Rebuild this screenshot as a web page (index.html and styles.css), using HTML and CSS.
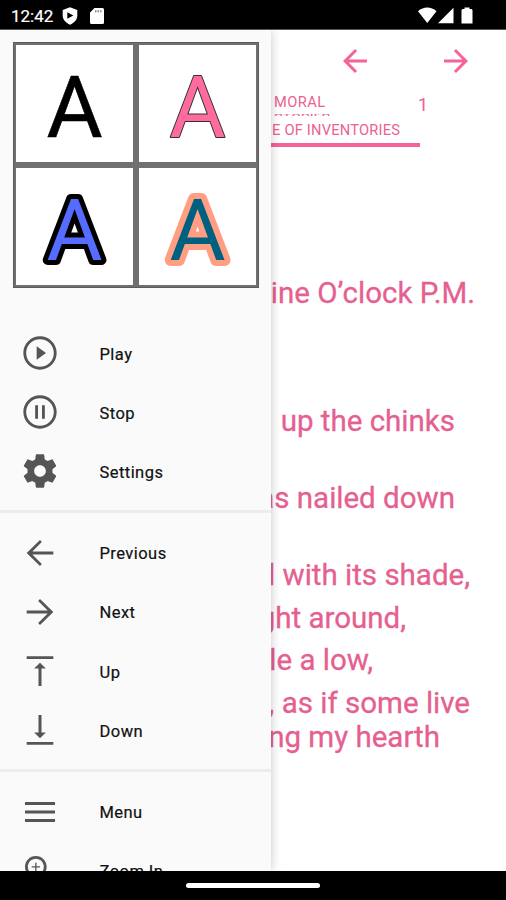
FILE: index.html
```html
<!DOCTYPE html>
<html lang="en">
<head>
<meta charset="utf-8">
<title>Reader</title>
<link rel="stylesheet" href="styles.css">
</head>
<body>
<div class="screen">
  <header class="status">
    <span class="clock">12:42</span>
    <svg class="shield" viewBox="0 0 16 18"><path fill="#fff" d="M8 0.3 15.3 3v5.5c0 4.2-3 7.4-7.3 9.2C3.700 15.900.7 12.700.7 8.500V3z"/><path fill="#000" d="M5.300 5.200v6.600l6-3.300z"/></svg>
    <svg class="sd" viewBox="0 0 14 16"><path fill="#fff" d="M4.500 0h8A1.500 1.500 0 0 1 14 1.500v13a1.500 1.500 0 0 1-1.500 1.500h-11A1.500 1.500 0 0 1 0 14.500V4.500z"/><path stroke="#888" stroke-width="2" stroke-dasharray="1.500 1" d="M5 3.200h7"/></svg>
    <svg class="signals" viewBox="0 0 56 18"><path fill="#fff" d="M0 4.200C5.500-.7 13-.7 18.500 4.200L9.250 16z"/><path fill="#fff" d="M20 16.300 35.500.7v15.600z"/><path fill="#fff" d="M44.500 2h2V.5h5V2h2l1 1v13.500h-11V3z"/></svg>
  </header>
  <main class="main">
    <nav class="drawer">
      <div class="styles">
        <div class="cell"><svg viewBox="0 0 117 117"><text class="letter plain" x="58.500" y="91.500">A</text></svg></div>
        <div class="cell"><svg viewBox="0 0 117 117"><text class="letter pink" x="58.500" y="91.500">A</text></svg></div>
        <div class="cell"><svg viewBox="0 0 117 117"><text class="letter blue" x="58.500" y="91.500">A</text></svg></div>
        <div class="cell"><svg viewBox="0 0 117 117"><text class="letter teal" x="58.500" y="91.500">A</text></svg></div>
      </div>
      <ul class="group">
        <li><svg viewBox="0 0 24 24"><path d="M10 16l5.600-4L10 8v8zM12 2C6.480 2 2 6.480 2 12s4.480 10 10 10 10-4.480 10-10S17.520 2 12 2zm0 18.300c-4.580 0-8.300-3.720-8.300-8.300S7.420 3.700 12 3.700s8.300 3.720 8.300 8.300-3.720 8.300-8.300 8.300z"/></svg><span>Play</span></li>
        <li><svg viewBox="0 0 24 24"><path d="M9.100 16h1.700V8H9.100v8zM12 2C6.480 2 2 6.480 2 12s4.480 10 10 10 10-4.480 10-10S17.520 2 12 2zm0 18.300c-4.580 0-8.300-3.720-8.300-8.300S7.420 3.700 12 3.700s8.300 3.720 8.300 8.300-3.720 8.300-8.300 8.300zM13.200 16h1.700V8h-1.700v8z"/></svg><span>Stop</span></li>
        <li><svg viewBox="0 0 24 24"><path d="M19.430 12.980c.04-.32.07-.64.07-.98s-.03-.66-.07-.98l2.110-1.650c.19-.15.24-.42.12-.64l-2-3.460c-.12-.22-.39-.3-.61-.22l-2.490 1c-.52-.4-1.080-.73-1.690-.98l-.38-2.650C14.460 2.180 14.250 2 14 2h-4c-.25 0-.46.18-.49.42l-.38 2.650c-.61.25-1.170.59-1.690.98l-2.490-1c-.23-.09-.49 0-.61.22l-2 3.460c-.13.22-.07.49.12.64l2.110 1.650c-.04.32-.07.65-.07.98s.03.66.07.98l-2.110 1.650c-.19.15-.24.42-.12.64l2 3.460c.12.22.39.3.61.22l2.490-1c.52.4 1.080.73 1.690.98l.38 2.650c.03.24.24.42.49.42h4c.25 0 .46-.18.49-.42l.38-2.650c.61-.25 1.170-.59 1.690-.98l2.490 1c.23.09.49 0 .61-.22l2-3.460c.12-.22.07-.49-.12-.64l-2.110-1.650zM12 15.500c-1.930 0-3.500-1.570-3.500-3.500s1.570-3.500 3.500-3.500 3.500 1.570 3.500 3.500-1.570 3.500-3.500 3.500z"/></svg><span>Settings</span></li>
      </ul>
      <ul class="group">
        <li><svg viewBox="0 0 24 24"><path d="M20 11.100H7.400l5.700-5.700L12 4.200 4 12l8 7.800 1.100-1.200-5.700-5.700H20z"/></svg><span>Previous</span></li>
        <li><svg viewBox="0 0 24 24"><path d="M4 11.100h12.600l-5.700-5.700L12 4.200l8 7.800-8 7.800-1.100-1.200 5.700-5.700H4z"/></svg><span>Next</span></li>
        <li><svg viewBox="0 0 24 24"><path d="M8.500 10.500h2.600V21h1.800V10.500h2.600L12 7zM4 3.100v1.700h16V3.100z"/></svg><span>Up</span></li>
        <li><svg viewBox="0 0 24 24"><path d="M15.500 13.500h-2.600V3h-1.800v10.500H8.500L12 17zM4 19.200v1.700h16v-1.700z"/></svg><span>Down</span></li>
      </ul>
      <ul class="group">
        <li><svg viewBox="0 0 24 24"><path d="M3 18h18v-1.800H3V18zm0-5.100h18v-1.800H3v1.800zm0-6.900v1.800h18V6H3z"/></svg><span>Menu</span></li>
        <li><svg viewBox="0 0 24 24"><path d="M15.500 14h-.79l-.28-.27C15.410 12.590 16 11.110 16 9.500 16 5.910 13.090 3 9.500 3S3 5.910 3 9.500 5.910 16 9.500 16c1.610 0 3.090-.59 4.230-1.570l.27.28v.79l5 4.990L20.490 19l-4.990-5zm-6 .3c-2.650 0-4.800-2.150-4.800-4.800s2.150-4.800 4.800-4.800 4.800 2.150 4.800 4.800-2.150 4.800-4.800 4.800z"/><path d="M12 9.100H9.900V7h-.8v2.100H7v.8h2.100V12h.8V9.900H12z"/></svg><span>Zoom In</span></li>
      </ul>
    </nav>
    <section class="page">
      <div class="pager">
        <svg viewBox="0 0 24 24"><path d="M20 11H7.800l5.600-5.600L12 4l-8 8 8 8 1.400-1.400L7.800 13H20z"/></svg>
        <svg viewBox="0 0 24 24"><path d="M4 11h12.200l-5.600-5.600L12 4l8 8-8 8-1.400-1.400 5.600-5.600H4z"/></svg>
      </div>
      <div class="tabs">
        <div class="tab">
          <div class="tab-name">MORAL</div>
          <div class="tab-rest">STORIES</div>
          <div class="tab-book">E OF INVENTORIES</div>
        </div>
        <div class="number">1</div>
      </div>
      <div class="poem">
        <p class="title"><span>ine O’clock P.M.</span></p>
        <p class="chinks"><span>up the chinks</span></p>
        <p class="down"><span>as nailed down</span></p>
        <p class="shade"><span>d with its shade,</span></p>
        <p class="around"><span>ght around,</span></p>
        <p class="low"><span>le a low,</span></p>
        <p class="live"><span>, as if some live</span></p>
        <p class="hearth"><span>ng my hearth</span></p>
      </div>
    </section>
  </main>
  <footer class="navbar"><div class="handle"></div></footer>
</div>
</body>
</html>
```

FILE: styles.css
```css
* { box-sizing: border-box; }
body, p, ul { margin: 0; padding: 0; }
body { font-family: Roboto, "Liberation Sans", sans-serif; background: #fff; }
svg { display: block; }
.screen { width: 506px; height: 900px; display: flex; flex-direction: column; overflow: hidden; }

.status { height: 30px; flex: none; background: #000; border-bottom: 1px solid #555; display: flex; align-items: center; padding: 2px 32px 0 11px; color: #fff; }
.clock { width: 51px; font-size: 17px; font-weight: 400; line-height: 20px; -webkit-text-stroke: 0.2px #fff; }
.shield { width: 16px; height: 18px; }
.sd { width: 14px; height: 16px; margin-left: 12px; }
.signals { width: 56px; height: 18px; margin-left: auto; }

.main { flex: 1; min-height: 0; display: flex; overflow: hidden; }
.drawer { width: 271px; flex: none; height: 841px; background: #fafafa; padding-top: 12px; overflow: hidden; box-shadow: 0 0 10px rgba(0, 0, 0, 0.22); position: relative; z-index: 1; }
.styles { width: 246px; height: 246px; margin: 0 0 35.500px 13px; display: grid; grid-template-columns: 117px 117px; grid-template-rows: 117px 117px; gap: 6px; padding: 3px; background: #707070; outline: 1px solid #5c5c5c; outline-offset: -1px; }
.cell { background: #fff; }
.letter { font-size: 86px; text-anchor: middle; stroke-linejoin: round; paint-order: stroke; }
.plain { fill: #000; stroke: #000; stroke-width: 0.6px; }
.pink { fill: #ff6b9f; stroke: #333; stroke-width: 2px; }
.blue { fill: #566bff; stroke: #000; stroke-width: 10px; }
.teal { fill: #00607f; stroke: #ff9e83; stroke-width: 12px; }

.group { list-style: none; }
.group + .group { margin-top: 9.500px; border-top: 3px solid #ececec; padding-top: 10px; }
.group li { height: 59.100px; display: flex; align-items: center; padding-left: 20px; font-size: 16.500px; font-weight: 400; letter-spacing: 0.450px; color: #111; -webkit-text-stroke: 0.200px #111; }
.group li span { padding-top: 2px; }
.group svg { width: 40px; height: 40px; fill: #555; margin-right: 39.500px; flex: none; }

.page { flex: 1; min-width: 0; overflow: hidden; color: #ec6193; }
.pager { height: 62px; display: flex; gap: 65px; padding: 13px 0 0 66px; }
.pager svg { width: 36px; height: 36px; fill: #f5639a; }
.tabs { display: flex; font-size: 14.700px; height: 56px; }
.tab { width: 149px; height: 55px; border-bottom: 4px solid #f5639a; overflow: hidden; }
.tab-name { height: 22px; line-height: 21px; padding-left: 3px; letter-spacing: 0.400px; }
.tab-rest { height: 2px; line-height: 10px; padding-left: 3px; overflow: hidden; letter-spacing: -0.200px; }
.tab-book { line-height: 20px; padding-left: 1px; margin-top: 4px; white-space: nowrap; letter-spacing: 0.200px; }
.number { width: 8px; line-height: 26px; font-size: 18px; margin-left: -2px; }

.poem { padding-top: 128px; font-size: 29.500px; line-height: 34px; color: #e56090; -webkit-text-stroke: 0.3px #e56090; }
.poem p { display: flex; justify-content: flex-end; height: 34px; white-space: nowrap; margin-bottom: 8.700px; }
.poem span { flex: none; }
.poem .title { width: 204px; margin-bottom: 94px; }
.poem .chinks { width: 184px; margin-bottom: 43px; }
.poem .down { width: 184px; margin-bottom: 43px; }
.poem .shade { width: 199px; }
.poem .around { width: 135px; }
.poem .low { width: 102px; }
.poem .live { width: 199px; margin-bottom: 0; }
.poem .hearth { width: 169px; }

.navbar { height: 29px; flex: none; background: #000; display: flex; justify-content: center; padding-top: 12px; }
.handle { width: 134px; height: 5px; border-radius: 3px; background: #fff; }
```
